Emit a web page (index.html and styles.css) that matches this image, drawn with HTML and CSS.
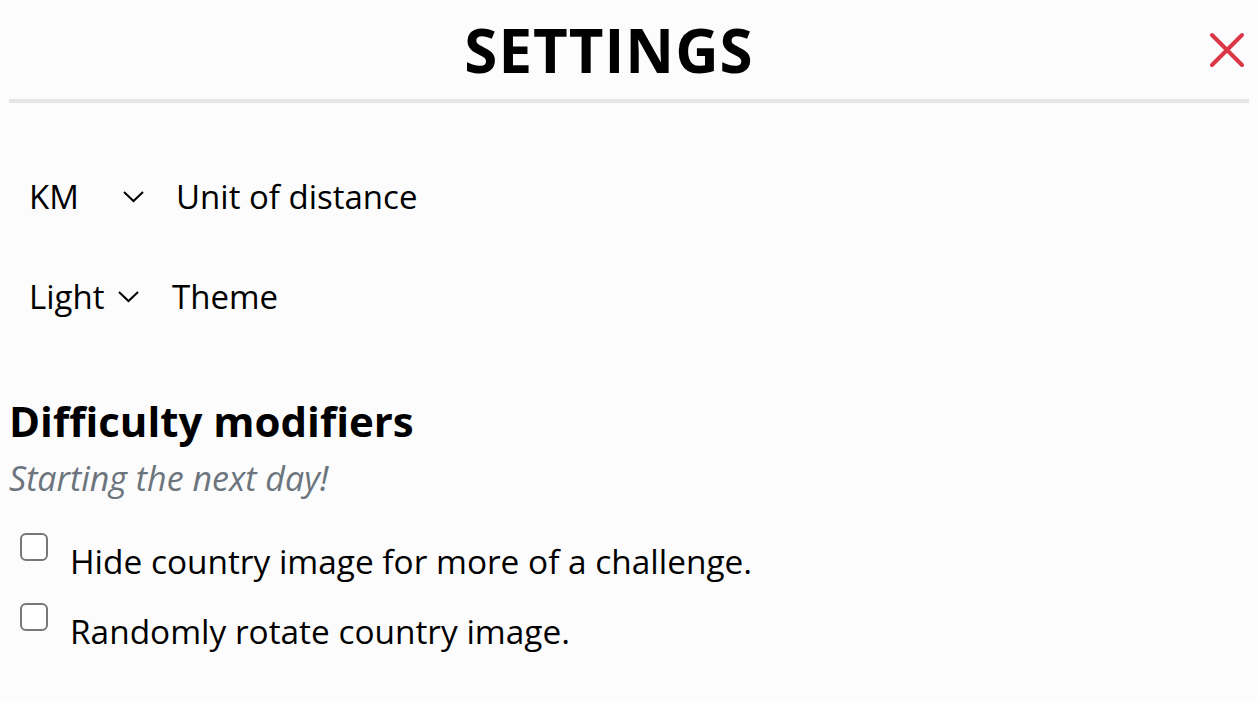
FILE: index.html
```html
<!DOCTYPE html>
<html lang="en">
<head>
  <meta charset="UTF-8" />
  <title>Settings</title>
  <link rel="stylesheet" href="styles.css">
</head>
<body>
  <div class="settings">
    <div class="header">
      <h1>SETTINGS</h1>
      <button type="button" class="close" aria-label="Close">
        <svg width="36" height="36" viewBox="0 0 36 36"><path d="M3 3 L33 33 M33 3 L3 33" stroke="#dc3545" stroke-width="4" stroke-linecap="round" fill="none"/></svg>
      </button>
    </div>

    <div class="options">
      <div class="row">
        <select class="pick pick-unit">
          <option>KM</option>
          <option>Miles</option>
        </select>
        <span class="label">Unit of distance</span>
      </div>

      <div class="row">
        <select class="pick pick-theme">
          <option>Light</option>
          <option>Dark</option>
        </select>
        <span class="label">Theme</span>
      </div>
    </div>

    <h2>Difficulty modifiers</h2>
    <p class="note">Starting the next day!</p>

    <label class="check">
      <input type="checkbox" />
      <span>Hide country image for more of a challenge.</span>
    </label>
    <label class="check">
      <input type="checkbox" />
      <span>Randomly rotate country image.</span>
    </label>
  </div>
</body>
</html>
```

FILE: styles.css
```css
body {
  margin: 0;
  background-color: #fcfcfc;
  font-family: "Open Sans", "Noto Sans", sans-serif;
  color: #000;
}
.settings {
  padding: 0 8px 0 9px;
}
.header {
  display: flex;
  align-items: center;
  height: 99px;
  border-bottom: 4px solid #e6e6e6;
}
h1 {
  flex: 1;
  margin: 0;
  text-align: center;
  font-size: 60px;
  font-weight: 700;
  letter-spacing: 1px;
}
.close {
  background: none;
  border: none;
  padding: 0;
  margin-right: 4px;
  width: 36px;
  height: 36px;
  cursor: pointer;
}
.options {
  margin-top: 43px;
}
.row {
  display: flex;
  align-items: center;
  height: 100px;
  font-size: 33px;
}
.pick {
  appearance: none;
  -webkit-appearance: none;
  border: none;
  background: transparent url("data:image/svg+xml,%3Csvg xmlns='http://www.w3.org/2000/svg' width='23' height='13' viewBox='0 0 23 13'%3E%3Cpath d='M2 2 L11.5 11 L21 2' stroke='%23000' stroke-width='2' fill='none'/%3E%3C/svg%3E") no-repeat right 11px center;
  font-family: inherit;
  font-size: 33px;
  color: #000;
  padding: 0 0 0 20px;
  height: 60px;
}
.pick-unit {
  width: 147px;
}
.pick-theme {
  width: 143px;
  background-position: right 12px center;
}
.label {
  margin-left: 20px;
}
h2 {
  margin: 50px 0 0;
  font-size: 42px;
  font-weight: 700;
  line-height: 50px;
}
.note {
  margin: 10px 0 37px;
  font-style: italic;
  color: #6c757d;
  font-size: 34px;
  line-height: 44px;
}
.check {
  display: flex;
  align-items: flex-start;
  font-size: 33.4px;
  line-height: 48px;
  margin-bottom: 22px;
}
.check input {
  appearance: none;
  -webkit-appearance: none;
  width: 28px;
  height: 28px;
  margin: -4px 22px 0 11px;
  border: 2px solid #777;
  border-radius: 6px;
  background: #fff;
  flex-shrink: 0;
}
```
